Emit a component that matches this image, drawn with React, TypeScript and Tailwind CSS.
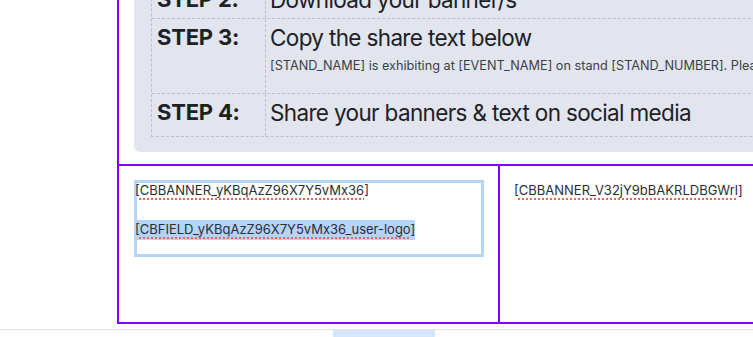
import React from "react";

const Row = ({
  step,
  title,
  sub,
  h,
  first,
  pt = "pt-[4px]",
}: {
  step: string;
  title: string;
  sub?: string;
  h: string;
  first?: boolean;
  pt?: string;
}) => (
  <div className={`flex ${h} ${first ? "" : "border-t border-dashed border-[#bdbfc6]"}`}>
    <div className={`w-[113px] shrink-0 pl-[5px] ${pt} text-[22px] leading-[29px] font-bold tracking-[-0.2px] text-[#1d2126]`}>{step}</div>
    <div className={`flex-1 border-l border-dashed border-[#bdbfc6] pl-[4px] ${pt} whitespace-nowrap`}>
      <div className="text-[22.5px] leading-[29px] tracking-[-0.65px] text-[#1d2126]">{title}</div>
      {sub && <div className="mt-[6px] text-[12.7px] leading-[16px] text-[#3a3f46]">{sub}</div>}
    </div>
  </div>
);

export default function App() {
  return (
    <div className="relative h-[337px] w-[753px] overflow-hidden bg-white font-['Inter',sans-serif]">
      <div className="-mt-[99px] ml-[117px] w-[760px] border-l-2 border-[#8000ff]">
        <div className="pl-[15px] pt-4 pb-[12px]">
          <div className="rounded-md bg-[#e2e5ee] pl-[17px] pt-4 pb-[15px]">
            <div className="border border-dashed border-[#bdbfc6]">
              <Row first step="STEP 1:" title="Choose your banner/s" h="h-[42px]" />
              <Row step="STEP 2:" title="Download your banner/s" h="h-[42px]" pt="pt-[8px]" />
              <Row
                step="STEP 3:"
                title="Copy the share text below"
                sub="[STAND_NAME] is exhibiting at [EVENT_NAME] on stand [STAND_NUMBER]. Please come and visit us!"
                h="h-[75px]"
              />
              <Row step="STEP 4:" title="Share your banners & text on social media" h="h-[43px]" />
            </div>
          </div>
        </div>
        <div className="grid h-[160px] grid-cols-[381px_1fr] border-y-2 border-[#8000ff] text-[13px] leading-[19.5px] text-[#2b2f33]">
          <div className="border-r-2 border-[#8000ff] pl-[15px] pr-[14px] pt-[14px]">
            <div className="h-[77px] ring-[3px] ring-inset ring-[#b5d4fb] whitespace-nowrap">
              <div className="pl-[1px] pt-[1px]">
                [<span className="underline decoration-dotted decoration-[#f0625a] decoration-[1.5px] underline-offset-[3px]">CBBANNER_yKBqAzZ96X7Y5vMx36</span>]
              </div>
              <div className="h-[19.5px]" />
              <div>
                <span className="inline-block bg-[#b5d4fb] pl-[1px]">
                  [<span className="underline decoration-dotted decoration-[#f0625a] decoration-[1.5px] underline-offset-[3px]">CBFIELD_yKBqAzZ96X7Y5vMx36_user-logo</span>]
                </span>
              </div>
            </div>
          </div>
          <div className="pl-[14px] pt-[15px] whitespace-nowrap">
            [<span className="underline decoration-dotted decoration-[#f0625a] decoration-[1.5px] underline-offset-[3px]">CBBANNER_V32jY9bBAKRLDBGWrl</span>]
          </div>
        </div>
      </div>
      <div className="mt-[5px] border-t border-[#e4e4e4]">
        <div className="ml-[333px] h-[8px] w-[102px] bg-[#d4e7fc]" />
      </div>
    </div>
  );
}
